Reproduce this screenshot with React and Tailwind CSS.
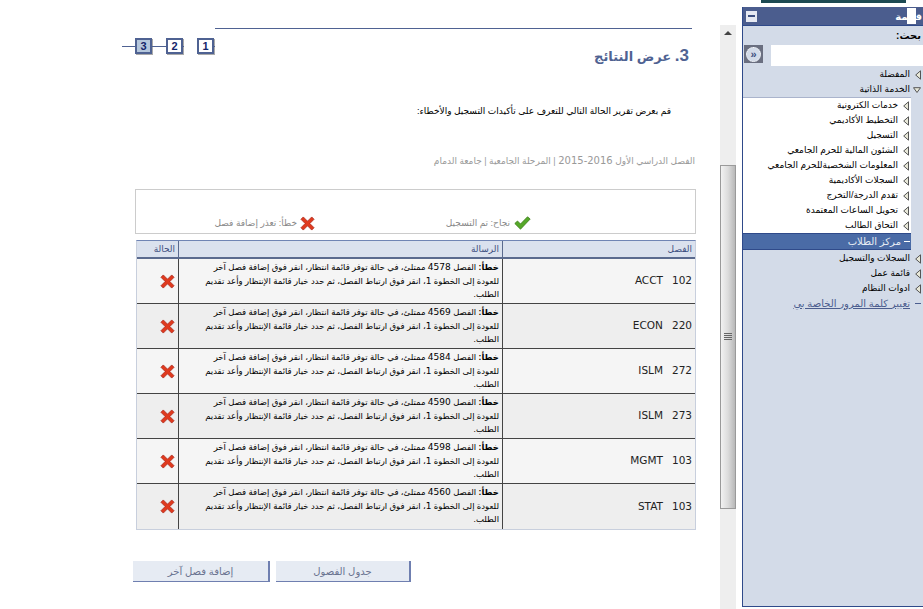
import React from "react";

const rows = [
  { course: "102", subj: "ACCT", crn: "4578" },
  { course: "220", subj: "ECON", crn: "4569" },
  { course: "272", subj: "ISLM", crn: "4584" },
  { course: "273", subj: "ISLM", crn: "4590" },
  { course: "103", subj: "MGMT", crn: "4598" },
  { course: "103", subj: "STAT", crn: "4560" },
];

const subItems = [
  "خدمات الكترونية",
  "التخطيط الأكاديمي",
  "التسجيل",
  "الشئون المالية للحرم الجامعي",
  "المعلومات الشخصيةللحرم الجامعي",
  "السجلات الأكاديمية",
  "تقدم الدرجة/التخرج",
  "تحويل الساعات المعتمدة",
  "التحاق الطالب",
];

const RedX = ({ size = 15 }) => (
  <svg width={size} height={size} viewBox="0 0 16 16">
    <path d="M1 3.5 3.5 1 8 5.5 12.5 1 15 3.5 10.5 8 15 12.5 12.5 15 8 10.5 3.5 15 1 12.5 5.5 8Z" fill="#e03a1e" stroke="#a8261a" strokeWidth="0.8" />
  </svg>
);

const GreenCheck = () => (
  <svg width="17" height="14" viewBox="0 0 17 14">
    <path d="M0.8 7.5 3.5 5 6.5 8 13.5 0.8 16.2 3 6.5 13.2Z" fill="#56a829" stroke="#3d7f1c" strokeWidth="0.8" />
  </svg>
);

// tree arrows, left-pointing when closed
const ArrowLeft = () => (
  <svg width="6" height="10" viewBox="0 0 6 10" className="shrink-0">
    <path d="M5.5 0.8V9.2L0.7 5Z" fill="#e8e8d8" stroke="#555" strokeWidth="1" />
  </svg>
);

const ArrowDown = () => (
  <svg width="8" height="6" viewBox="0 0 8 6" className="-ml-[2px] shrink-0">
    <path d="M0.5 0.7H7.5L4 5.5Z" fill="#e8e8d8" stroke="#555" strokeWidth="1" />
  </svg>
);

const StepBox = ({ n, active }) => (
  <div
    className={`flex h-[16px] w-[17px] items-center justify-center border-2 border-[#4f6292] text-[11px] leading-none font-bold text-[#14256b] shadow-[1px_1px_0_#aaa] ${
      active ? "bg-[#b5c7dc]" : "bg-white"
    }`}
  >
    {n}
  </div>
);

const TopItem = ({ label, open }) => (
  <div className="flex h-[15px] items-center gap-[5px] pr-[2px] text-[9px] leading-none text-black">
    {open ? <ArrowDown /> : <ArrowLeft />}
    <span>{label}</span>
  </div>
);

const Sidebar = () => (
  <div dir="rtl" className="relative mt-[7px] ml-[6px] flex h-[600px] w-[181px] shrink-0 flex-col border-b border-l border-[#2f4a8a] bg-[#d3dbe8]">
    <div className="flex h-[19px] shrink-0 items-center justify-between border-b border-[#2f4a8a] bg-[#4b5d8e] pl-[3px] text-[10px] font-bold text-white">
      <span className="pr-[1px]">قائمة</span>
      <div className="flex h-[11px] w-[11px] items-center justify-center bg-[#e6e9f2]">
        <div className="h-[2px] w-[7px] bg-[#3d4f80]" />
      </div>
    </div>
    {/* page glyph that sits over the title */}
    <div className="absolute top-[1px] right-[7px] h-[16px] w-[9px] bg-white" />
    <div className="pt-[3px] pr-[2px] pb-[2px] text-[10px] leading-[14px] font-bold text-black">بحث:</div>
    <div className="flex h-[22px] shrink-0 items-start justify-between pl-[1px]">
      <input className="h-[21px] w-[152px] bg-white" aria-label="بحث" />
      <div className="flex h-[18px] w-[19px] items-center justify-center bg-[#6a6f80]">
        <div className="flex h-[15px] w-[15px] items-center justify-center rounded-full border border-dotted border-white bg-[#d3dbe8] text-[11px] leading-none font-bold text-[#3d4f80]">
          «
        </div>
      </div>
    </div>
    <TopItem label="المفضلة" />
    <TopItem label="الخدمة الذاتية" open />
    <div className="mr-[12px] border-t border-[#aab4cc] bg-white">
      {subItems.map((item) => (
        <div key={item} className="flex h-[15px] items-center gap-[5px] pr-[2px] text-[9px] leading-none whitespace-nowrap text-black">
          <ArrowLeft />
          <span>{item}</span>
        </div>
      ))}
    </div>
    <div className="mr-[12px] flex h-[17px] shrink-0 items-center gap-[3px] border-y border-[#2f4a8a] bg-[#4a6ba6] pr-[1px] text-[10px] text-[#e6ebf3]">
      <div className="h-[1px] w-[6px] bg-white" />
      <span>مركز الطلاب</span>
    </div>
    <div className="pt-[1px]">
      <TopItem label="السجلات والتسجيل" />
      <TopItem label="قائمة عمل" />
      <TopItem label="ادوات النظام" />
      <div className="flex h-[15px] items-center gap-[5px] pr-[2px] text-[10px] leading-none text-[#4b5d8e]">
        <div className="h-[1px] w-[6px] bg-[#4b5d8e]" />
        <span className="underline">تغيير كلمة المرور الخاصة بي</span>
      </div>
    </div>
  </div>
);

const Scrollbar = () => (
  <div className="mt-[25px] flex h-[584px] w-[16px] shrink-0 flex-col items-center bg-[#eeeeee]">
    <div className="mt-[6px] h-0 w-0 border-x-[4px] border-b-[4px] border-x-transparent border-b-[#444]" />
    <div className="mt-[130px] flex h-[344px] w-[16px] items-center justify-center border border-[#9a9a9a] bg-gradient-to-r from-[#f2f2f2] via-[#dcdcdc] to-[#b8b8b8]">
      <div className="h-[8px] w-[8px] bg-[repeating-linear-gradient(#666_0,#666_1px,transparent_1px,transparent_2px)]" />
    </div>
  </div>
);

export default function App() {
  return (
    <div className="relative flex h-[609px] w-[923px] overflow-hidden bg-white font-['Liberation_Sans','DejaVu_Sans',sans-serif]">
      <div className="absolute top-0 left-[761px] h-[3px] w-[145px] bg-[#1d4a52]" />

      <div className="flex w-[720px] shrink-0 flex-col pt-[28px]">
        <div className="ml-[215px] h-[1px] w-[477px] bg-[#4f6292]" />

        <div className="mt-[9px] flex items-start justify-between pr-[31px] pl-[122px]">
          <div className="flex h-[16px] w-[93px] items-center">
            <div className="h-[1px] w-[13px] bg-[#4f6292]" />
            <StepBox n="3" active />
            <div className="h-[1px] w-[14px] bg-[#4f6292]" />
            <StepBox n="2" />
            <div className="h-[1px] w-[1px] bg-[#4f6292]" />
            <div className="w-[13px]" />
            <StepBox n="1" />
            <div className="h-[1px] w-[1px] bg-[#4f6292]" />
          </div>
          <div dir="rtl" className="mt-[7px] text-[13px] leading-[22px] font-bold text-[#4f6292]">
            <span className="text-[17px]">3.</span> عرض النتائج
          </div>
        </div>

        <div dir="rtl" className="mt-[36px] mr-[49px] text-[9px] leading-[14px] text-black">
          قم بعرض تقرير الحالة التالي للتعرف على تأكيدات التسجيل والأخطاء:
        </div>

        <div dir="rtl" className="mt-[36px] mr-[25px] text-[9px] leading-[14px] text-[#999999]">
          الفصل الدراسي الأول <span className="font-['DejaVu_Sans'] text-[10px]">2016-2015</span> | المرحلة الجامعية | جامعة الدمام
        </div>

        <div dir="rtl" className="mt-[21px] ml-[135px] flex h-[45px] w-[561px] items-end border border-[#cccccc] pr-[164px] pb-[2px] text-[9px] leading-[16px] text-[#888888]">
          <div className="flex w-[216px] items-center gap-[4px]">
            <GreenCheck />
            <span>نجاح: تم التسجيل</span>
          </div>
          <div className="flex items-center gap-[3px]">
            <RedX />
            <span>خطأ: تعذر إضافة فصل</span>
          </div>
        </div>

        <div dir="rtl" className="mt-[6px] ml-[136px] w-[560px] border border-[#c8cfdd] border-t-[#6f84b4]">
          <div className="flex h-[18px] border-b-2 border-[#5a6a8e] bg-[#dae1ee] text-[9px] leading-[16px] text-[#3d4f80]">
            <div className="w-[193px] border-l border-[#5a6a8e] pr-[3px]">الفصل</div>
            <div className="w-[324px] border-l border-[#5a6a8e] pr-[3px]">الرسالة</div>
            <div className="flex-1 pr-[3px]">الحالة</div>
          </div>
          {rows.map((row, i) => (
            <div
              key={row.crn}
              className={`flex h-[45px] border-b border-[#444] last:border-b-0 ${i % 2 === 0 ? "bg-[#f5f5f5]" : "bg-[#eeeeee]"}`}
            >
              <div className="flex w-[193px] items-center gap-[9px] border-l border-[#444] pr-[3px] font-['DejaVu_Sans'] text-[10.5px] text-[#222]">
                <span>{row.course}</span>
                <span>{row.subj}</span>
              </div>
              <div className="w-[324px] border-l border-[#444] pt-[2px] pr-[3px] pl-[3px] text-[8.5px] leading-[13.5px] text-black">
                <b>خطأ:</b> الفصل <span className="font-['DejaVu_Sans'] text-[9px]">{row.crn}</span> ممتلئ، في حالة توفر قائمة انتظار، انقر فوق إضافة فصل آخر
                <br />
                للعودة إلى الخطوة <span className="font-['DejaVu_Sans'] text-[9px]">1</span>، انقر فوق ارتباط الفصل، ثم حدد خيار قائمة الإنتظار وأعد تقديم
                <br />
                الطلب.
              </div>
              <div className="flex flex-1 items-center justify-start pr-[3px]">
                <RedX />
              </div>
            </div>
          ))}
        </div>

        <div className="mt-[31px] ml-[133px] flex gap-[6px]">
          <button className="h-[21px] w-[137px] border-r-2 border-b border-[#6f7fb0] bg-[#e6ebf3] text-[10px] text-[#6a7390]" dir="rtl">
            إضافة فصل آخر
          </button>
          <button className="h-[21px] w-[135px] border-r-2 border-b border-[#6f7fb0] bg-[#e6ebf3] text-[10px] text-[#6a7390]" dir="rtl">
            جدول الفصول
          </button>
        </div>
      </div>

      <Scrollbar />
      <Sidebar />
    </div>
  );
}
